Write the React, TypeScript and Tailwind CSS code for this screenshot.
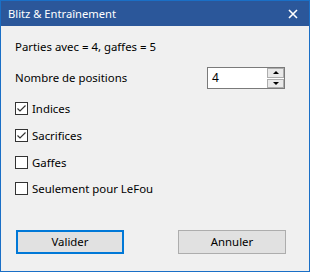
import { ReactNode } from "react"

const font = { fontFamily: '"Noto Sans", "Open Sans", sans-serif' }

const Check = ({ checked, children, className }: { checked?: boolean; children: ReactNode; className?: string }) => (
  <div className={`flex items-center h-[17px] ${className ?? ""}`}>
    <div className="w-[13px] h-[13px] border border-[#333333] bg-white flex items-center justify-center">
      {checked && (
        <svg width="11" height="11" viewBox="0 0 11 11">
          <path d="M1.5 5.5 L4 8 L9.5 2.5" stroke="#333333" strokeWidth="1.2" fill="none" />
        </svg>
      )}
    </div>
    <span className="ml-[4px] text-[11.4px] leading-[16px] text-black">{children}</span>
  </div>
)

export default function App() {
  return (
    <div className="w-[310px] h-[272px] border border-[#1a6fc6] bg-[#f0f0f0] flex flex-col" style={font}>
      {/* barre de titre */}
      <div className="h-[25px] bg-[#2b579a] flex items-center justify-between pl-[7px] pr-[11px]">
        <span className="text-white text-[11.2px] leading-[16px]">Blitz &amp; Entraînement</span>
        <svg width="10" height="10" viewBox="0 0 10 10">
          <path d="M1 1 L9 9 M9 1 L1 9" stroke="white" strokeWidth="1.6" />
        </svg>
      </div>

      <div className="flex flex-col pl-[14px] pr-[24px]">
        <div className="mt-[13px] text-[11.4px] leading-[16px] text-black">Parties avec = 4, gaffes = 5</div>

        <div className="mt-[12px] flex items-center justify-between h-[22px]">
          <span className="text-[11.4px] leading-[16px] text-black">Nombre de positions</span>
          <div className="w-[78px] h-[22px] border border-[#7a7a7a] bg-white flex">
            <span className="flex-1 pl-[4px] text-[12px] leading-[20px] text-black">4</span>
            <div className="w-[17px] flex flex-col gap-[1px]">
              <div className="flex-1 border border-[#adadad] bg-[#e9e9e9] flex items-center justify-center">
                <svg width="6" height="3" viewBox="0 0 6 3"><path d="M0 3 L3 0 L6 3 Z" fill="#000" /></svg>
              </div>
              <div className="flex-1 border border-[#adadad] bg-[#e9e9e9] flex items-center justify-center">
                <svg width="6" height="3" viewBox="0 0 6 3"><path d="M0 0 L6 0 L3 3 Z" fill="#000" /></svg>
              </div>
            </div>
          </div>
        </div>

        <Check checked className="mt-[11px]">Indices</Check>
        <Check checked className="mt-[10px]">Sacrifices</Check>
        <Check className="mt-[10px]">Gaffes</Check>
        <Check className="mt-[9px]">Seulement pour LeFou</Check>

        <div className="mt-[33px] flex justify-between pl-[1px]">
          <button className="w-[108px] h-[24px] border-2 border-[#0078d7] bg-[#e1e1e1] text-[11.4px] text-black">Valider</button>
          <button className="w-[108px] h-[24px] border border-[#adadad] bg-[#e1e1e1] text-[11.4px] text-black -mr-[1px]">Annuler</button>
        </div>
      </div>
    </div>
  )
}
